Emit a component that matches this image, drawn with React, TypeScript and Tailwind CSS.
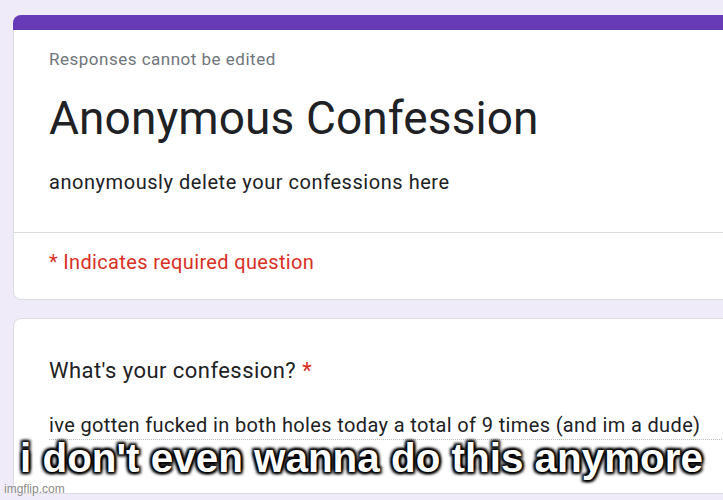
export default function App() {
  return (
    <div className="relative h-[500px] w-[723px] overflow-hidden bg-[#f0ebf8] pl-[13px] pt-[15px] font-['Roboto',sans-serif]">
      {/* Header card */}
      <div className="w-[760px]">
        <div className="h-[15px] rounded-t-lg bg-[#673ab7]" />
        <div className="rounded-b-lg border border-t-0 border-[#dadce0] bg-white">
          <div className="border-b border-[#dadce0] pl-[35px] pt-[19px] pb-[38px]">
            <div className="text-[17px] leading-[20px] tracking-[0.5px] text-[#70757a]">Responses cannot be edited</div>
            <h1 className="mt-[21px] text-[46px] leading-[56px] tracking-[0.1px] text-[#202124]">Anonymous Confession</h1>
            <p className="mt-[24px] text-[20px] leading-[24px] tracking-[0.55px] text-[#202124]">anonymously delete your confessions here</p>
          </div>
          <div className="pl-[35px] pt-[17px] pb-[25px] text-[20px] leading-[24px] tracking-[0.35px] text-[#d93025]">
            * Indicates required question
          </div>
        </div>
      </div>

      {/* Question card */}
      <div className="mt-[18px] h-[176px] w-[760px] rounded-lg border border-[#dadce0] bg-white pl-[35px] pt-[40px]">
        <div className="text-[22px] leading-[24px] tracking-[0.45px] text-[#202124]">
          What's your confession? <span className="text-[#d93025]">*</span>
        </div>
        <div className="mt-[30px] border-b border-dotted border-[#bdbdbd] pb-[2px] text-[20px] leading-[24px] tracking-[0.36px] text-[#202124]">
          ive gotten fucked in both holes today a total of 9 times (and im a dude)
        </div>
      </div>

      {/* Caption overlay */}
      <div className="absolute left-0 right-0 top-[438px] text-center font-['Liberation_Sans',Arial,sans-serif] text-[40.4px] font-bold leading-[40px] text-white [text-shadow:0_0_2px_#000,0_0_3px_#000,2px_2px_3px_#000,-2px_-2px_3px_#000,2px_-2px_3px_#000,-2px_2px_3px_#000]">
        i don't even wanna do this anymore
      </div>

      <div className="absolute bottom-[4px] left-[4px] font-['Liberation_Sans',Arial,sans-serif] text-[12px] leading-[14px] text-[#8a8a8a] [text-shadow:0_0_2px_#fff]">
        imgflip.com
      </div>
    </div>
  );
}
